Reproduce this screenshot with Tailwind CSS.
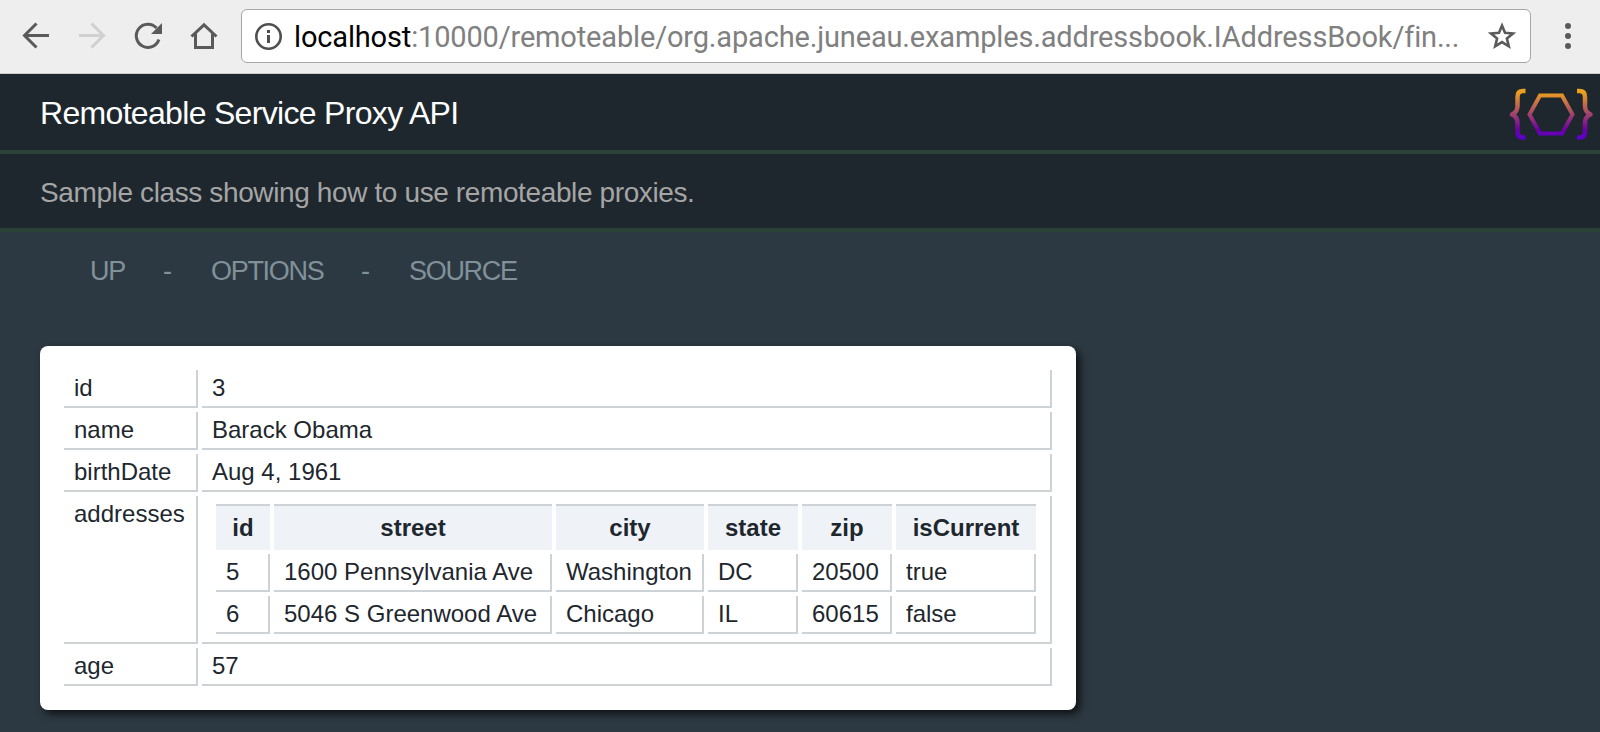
<!DOCTYPE html>
<html lang="en">
<head>
<meta charset="utf-8">
<title>Remoteable Service Proxy API</title>
<script src="https://cdn.jsdelivr.net/npm/@tailwindcss/browser@4"></script>
</head>
<body class="w-[1600px] h-[732px] overflow-hidden bg-[#2d3942] font-['Liberation_Sans',Arial,sans-serif] text-2xl text-[#1e272e]">
<!-- Browser toolbar -->
<div class="flex h-[74px] items-center border-b border-[#cbcbcb] bg-[#eeeeee] pb-px">
  <svg class="h-[72px] w-[241px] shrink-0" viewBox="0 0 241 72" fill="none" stroke="#5a5a5a" stroke-width="3">
    <path d="M49 35.500H25M36.500 23.500L24.500 35.500L36.500 47.500"/>
    <path stroke="#d0d0d0" d="M79 35.500H103M91.500 23.500L103.500 35.500L91.500 47.500"/>
    <path d="M156.500 28A11.600 11.600 0 1 0 158.900 39.500"/>
    <path fill="#5a5a5a" stroke="none" d="M162 23V34H151Z"/>
    <path d="M191.500 36.500L204 24.800L216.500 36.500M195.500 33V47.500H212.500V33"/>
  </svg>
  <div class="flex h-[54px] w-[1290px] items-center rounded-md border border-[#a6a6a6] bg-white px-[13px]">
    <svg class="size-[28px] shrink-0" viewBox="0 0 28 28" fill="none" stroke="#4f4f4f" stroke-width="2.600"><circle cx="13.500" cy="14.500" r="12.200"/><path stroke-width="3" d="M13.500 13V21M13.500 8V11"/></svg>
    <div class="ml-[11px] flex-1 whitespace-nowrap pt-px font-['Roboto',sans-serif] text-[29px] leading-[52px] tracking-[-0.16px] text-[#808080]"><span class="text-black">localhost</span>:10000/remoteable/org.apache.juneau.examples.addressbook.IAddressBook/fin...</div>
    <svg class="size-[30px] shrink-0" viewBox="0 0 30 30" fill="none" stroke="#5a5a5a" stroke-width="2.600"><path d="M15 4.600L18 11.800L26 12.500L19.900 17.600L21.800 25.300L15 21.100L8.200 25.300L10.100 17.600L4 12.500L12 11.800Z"/></svg>
  </div>
  <svg class="ml-[34px] h-[30px] w-[6px]" viewBox="0 0 6 30" fill="#5a5a5a"><circle cx="3" cy="5" r="3"/><circle cx="3" cy="15" r="3"/><circle cx="3" cy="25" r="3"/></svg>
</div>
<!-- Title and description -->
<header>
  <div class="flex h-20 justify-between border-b-4 border-[#2b4238] bg-[#1e272e] pl-10">
    <h1 class="whitespace-nowrap text-[32px] leading-[79px] tracking-[-0.68px] text-white">Remoteable Service Proxy API</h1>
    <svg class="h-[76px] w-[100px]" viewBox="0 0 100 76" fill="none" stroke="url(#g)" stroke-width="4">
      <defs><linearGradient id="g" gradientUnits="userSpaceOnUse" x1="0" y1="14" x2="0" y2="66"><stop offset="0.080" stop-color="#eda01d"/><stop offset="0.800" stop-color="#6c00a5"/><stop offset="1" stop-color="#5a00d2"/></linearGradient></defs>
      <path stroke-width="4.500" stroke-linejoin="round" d="M25.500 17H23Q17.500 17 17.500 23V32Q17.500 38 12 40.500Q17.500 43 17.500 49V57Q17.500 63.500 23 63.500H25.500"/>
      <path stroke-width="4.500" stroke-linejoin="round" d="M77 17H79.500Q85 17 85 23V32Q85 38 90.500 40.500Q85 43 85 49V57Q85 63.500 79.500 63.500H77"/>
      <path d="M40 21.500H62L72.500 40.500L62 59.500H40L29.500 40.500Z"/>
    </svg>
  </div>
  <div class="h-[78px] whitespace-nowrap border-b-4 border-[#2b4238] bg-[#1e272e] pl-10 text-[28px] leading-[77px] tracking-[-0.38px] text-[#a5a5a5]">Sample class showing how to use remoteable proxies.</div>
</header>
<nav class="flex h-[114px] pl-[90px] pt-[19px] text-[27px] leading-[40px] tracking-[-1.3px] text-[#80919a]">
  <a class="w-[73px]">UP</a><span class="w-[48px]">-</span><a class="w-[150px]">OPTIONS</a><span class="w-[48px]">-</span><a>SOURCE</a>
</nav>
<!-- Record -->
<main class="ml-10 h-[364px] w-[1036px] rounded-lg bg-white p-6 leading-[28px] shadow-[4px_4px_8px_rgba(0,0,0,0.7)]">
  <div class="grid grid-cols-[134px_850px] grid-rows-[38px_38px_38px_148px_38px] gap-1 whitespace-nowrap *:border-r-2 *:border-b-2 *:border-[#cdd2d6] *:px-2.5 *:pt-1">
    <div>id</div><div>3</div>
    <div>name</div><div>Barack Obama</div>
    <div>birthDate</div><div>Aug 4, 1961</div>
    <div>addresses</div>
    <div>
      <div class="ml-1 mt-1 grid grid-cols-[54px_278px_148px_90px_90px_140px] grid-rows-[46px_38px_38px] gap-1">
        <div class="border-t-2 border-[#cdd2d6] bg-[#eff3f7] pt-2 text-center font-bold">id</div>
        <div class="border-t-2 border-[#cdd2d6] bg-[#eff3f7] pt-2 text-center font-bold">street</div>
        <div class="border-t-2 border-[#cdd2d6] bg-[#eff3f7] pt-2 text-center font-bold">city</div>
        <div class="border-t-2 border-[#cdd2d6] bg-[#eff3f7] pt-2 text-center font-bold">state</div>
        <div class="border-t-2 border-[#cdd2d6] bg-[#eff3f7] pt-2 text-center font-bold">zip</div>
        <div class="border-t-2 border-[#cdd2d6] bg-[#eff3f7] pt-2 text-center font-bold">isCurrent</div>
        <div class="border-r-2 border-b-2 border-[#cdd2d6] px-2.5 pt-1">5</div>
        <div class="border-r-2 border-b-2 border-[#cdd2d6] px-2.5 pt-1">1600 Pennsylvania Ave</div>
        <div class="border-r-2 border-b-2 border-[#cdd2d6] px-2.5 pt-1">Washington</div>
        <div class="border-r-2 border-b-2 border-[#cdd2d6] px-2.5 pt-1">DC</div>
        <div class="border-r-2 border-b-2 border-[#cdd2d6] px-2.5 pt-1">20500</div>
        <div class="border-r-2 border-b-2 border-[#cdd2d6] px-2.5 pt-1">true</div>
        <div class="border-r-2 border-b-2 border-[#cdd2d6] px-2.5 pt-1">6</div>
        <div class="border-r-2 border-b-2 border-[#cdd2d6] px-2.5 pt-1">5046 S Greenwood Ave</div>
        <div class="border-r-2 border-b-2 border-[#cdd2d6] px-2.5 pt-1">Chicago</div>
        <div class="border-r-2 border-b-2 border-[#cdd2d6] px-2.5 pt-1">IL</div>
        <div class="border-r-2 border-b-2 border-[#cdd2d6] px-2.5 pt-1">60615</div>
        <div class="border-r-2 border-b-2 border-[#cdd2d6] px-2.5 pt-1">false</div>
      </div>
    </div>
    <div>age</div><div>57</div>
  </div>
</main>
</body>
</html>
